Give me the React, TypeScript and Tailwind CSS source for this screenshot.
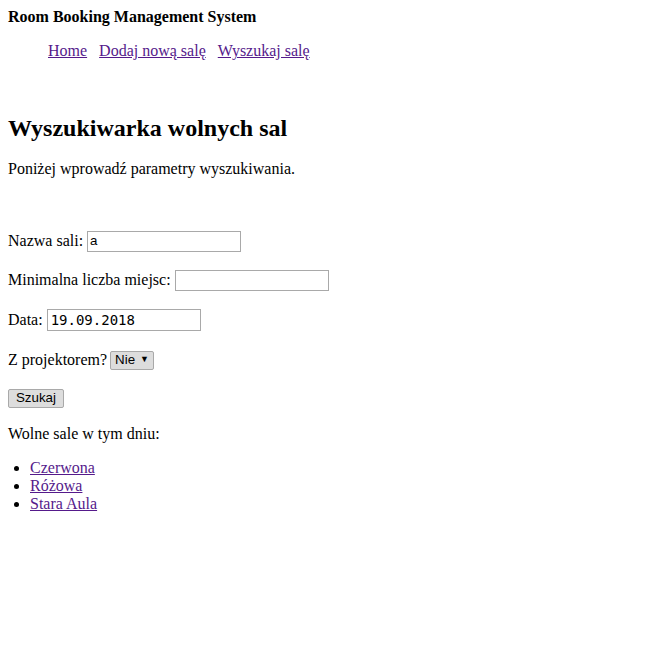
export default function App() {
  const serif = "font-['Liberation_Serif',serif]";
  const link = "text-[#551a8b] underline";
  const box = "inline-flex items-center border border-[#a9a9a9] bg-white box-border";
  return (
    <div className={`${serif} text-[16px] text-black bg-white min-h-[670px] p-2`}>
      <div className="font-bold leading-[18px]">Room Booking Management System</div>
      <div className="mt-4 pl-10 flex gap-3 leading-[18px]">
        <a className={link}>Home</a>
        <a className={link}>Dodaj nową salę</a>
        <a className={link}>Wyszukaj salę</a>
      </div>
      <h2 className="mt-[54px] text-[24px] font-bold leading-[28px]">Wyszukiwarka wolnych sal</h2>
      <p className="mt-[18px] leading-[18px]">Poniżej wprowadź parametry wyszukiwania.</p>

      <div className="mt-[52px] h-[22px] flex items-center">
        <span>Nazwa sali:</span>
        <span className={`${box} ml-[4px] w-[154px] h-[21px] pl-[2px] text-[13.33px] font-['Liberation_Sans',sans-serif]`}>a</span>
      </div>
      <div className="mt-[17px] h-[22px] flex items-center">
        <span>Minimalna liczba miejsc:</span>
        <span className={`${box} ml-[4px] w-[154px] h-[21px]`}></span>
      </div>
      <div className="mt-[18px] h-[22px] flex items-center">
        <span>Data:</span>
        <span className={`${box} ml-[4px] w-[154px] h-[22px] pl-[3px] text-[14px] font-['DejaVu_Sans_Mono',monospace]`}>19.09.2018</span>
      </div>
      <div className="mt-[18px] h-[22px] flex items-center">
        <span>Z projektorem?</span>
        <span className="ml-[3px] inline-flex items-center h-[19px] w-[44px] border border-[#a9a9a9] rounded-[2px] bg-[#dddddd] pl-[4px] text-[13.33px] font-['Liberation_Sans',sans-serif] box-border">
          Nie<span className="ml-[5px] text-[9px]">▼</span>
        </span>
      </div>
      <div className="mt-[16px] h-[22px] flex items-center">
        <span className="inline-flex items-center justify-center h-[19px] w-[56px] border border-[#a9a9a9] rounded-[2px] bg-[#dddddd] text-[13.33px] font-['Liberation_Sans',sans-serif] box-border">
          Szukaj
        </span>
      </div>
      <p className="mt-[16px] leading-[18px]">Wolne sale w tym dniu:</p>
      <ul className="mt-[16px] pl-[22px] list-disc leading-[18px]">
        <li><a className={link}>Czerwona</a></li>
        <li><a className={link}>Różowa</a></li>
        <li><a className={link}>Stara Aula</a></li>
      </ul>
    </div>
  );
}
